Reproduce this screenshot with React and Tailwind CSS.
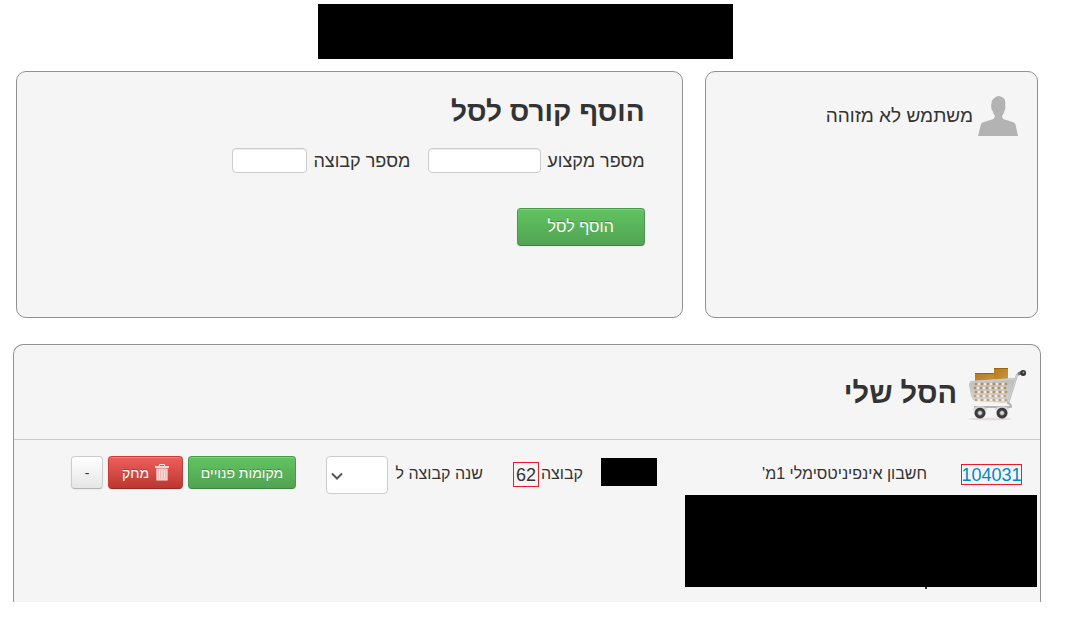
import React from "react";

function UserIcon() {
  return (
    <svg viewBox="0 0 40 40" className="h-10 w-10 shrink-0" fill="#b3b3b3" aria-hidden="true">
      <path d="M0 40 3 28Q3.500 26.500 6 26L14 23.500Q17 22.500 16.800 19.500Q15.300 18 14.700 15Q13.200 14 13.200 11.500Q12.800 9 13.600 7Q13.500 3.500 16.500 2Q18.500 0 20.500 0Q22 0 23 .800Q26.500 1.500 27.200 5Q27.500 7 27.200 9Q28.200 12.500 26.400 15Q25.800 18 24.200 19.500Q23.800 22.500 26.500 23.500L34.500 26Q37 26.500 37.500 28.500L40 40Z" />
    </svg>
  );
}

function CartIcon() {
  const rows = [385, 389, 393, 397, 401];
  return (
    <svg viewBox="966 364 64 60" className="h-[60px] w-16 shrink-0" aria-hidden="true">
      <defs>
        <linearGradient id="box" x1="0" y1="0" x2="1" y2="1">
          <stop offset="0" stopColor="#b57a1c" />
          <stop offset="1" stopColor="#ca9744" />
        </linearGradient>
        <linearGradient id="mesh" x1="0" y1="0" x2="0" y2="1">
          <stop offset="0" stopColor="#bcbcbc" />
          <stop offset="1" stopColor="#d6d5d3" />
        </linearGradient>
        <radialGradient id="wheel">
          <stop offset="0" stopColor="#f2f2f2" />
          <stop offset=".3" stopColor="#b8b8b8" />
          <stop offset=".5" stopColor="#444" />
          <stop offset=".8" stopColor="#333" />
          <stop offset="1" stopColor="#777" />
        </radialGradient>
      </defs>
      <ellipse cx="991" cy="420" rx="22" ry="1.300" fill="#e4dddd" />
      <path d="M976 374.500h19v9h-19z" fill="url(#box)" />
      <path d="M995 369h14v14h-14z" fill="url(#box)" />
      <path d="M976 374.500h19M995 369.500h14" stroke="#9b6510" />
      <path d="M973 382 1016 379Q1018 380 1016 383L1011 401Q1009 404 1005 404L976 402Q973 401 972 396L970 386Q970 383 973 382Z" fill="url(#mesh)" />
      {rows.map((y, r) =>
        [0, 1, 2, 3, 4, 5].map((c) => (
          <path
            key={`${r}-${c}`}
            d={`M${977 + c * 6 - (r % 2) * 1} ${y - 1.6}l1.600 1.600-1.600 1.600-1.600-1.600z`}
            fill={r < 3 ? "#bb8845" : "#c89c6b"}
          />
        ))
      )}
      {rows.map((y, r) =>
        [0, 1, 2, 3, 4].map((c) => (
          <circle key={`${r}+${c}`} cx={980 + c * 6 - (r % 2)} cy={y} r="1.100" fill="#f6f4f2" />
        ))
      )}
      <path d="M971 383 1016 380" stroke="#c9c9c9" strokeWidth="2" fill="none" />
      <path d="M1022 374 1018 376 1009 404Q1012 405 1012 408L975 408" stroke="#b5b5b5" strokeWidth="2.200" fill="none" strokeLinejoin="round" />
      <path d="M1018 376 1009 403" stroke="#dedede" strokeWidth=".800" />
      <path d="M1019 375 1024 373" stroke="#777" strokeWidth="3" />
      <circle cx="1024.200" cy="374" r="2.900" fill="#333" />
      <circle cx="1024.500" cy="373.500" r="1" fill="#aaa" />
      <circle cx="981" cy="414" r="5.700" fill="url(#wheel)" />
      <circle cx="1003" cy="414" r="5.700" fill="url(#wheel)" />
      <path d="M974 410.500Q981 405 988 410.500M996 410.500Q1003 405 1010 410.500" stroke="#d4d4d4" strokeWidth="1.500" fill="none" />
    </svg>
  );
}

function TrashIcon() {
  return (
    <svg viewBox="0 0 14 17" className="h-[17px] w-3.5 shrink-0" fill="none" stroke="#fbe3e2" aria-hidden="true">
      <path d="M4.500 2V.5h5V2" />
      <path d="M0 3h14" strokeWidth="1.800" />
      <path d="M2 5v11h10V5z" fill="#f0b5b3" strokeWidth="1.200" />
      <path d="M4.500 6v9M7 6v9M9.500 6v9" strokeWidth="1.200" />
    </svg>
  );
}

const panel = "rounded-[10px] border border-[#919191] bg-[#f5f5f5]";
const field =
  "h-[25px] rounded-[4px] border border-[#ccc] bg-white px-1 text-sm shadow-[inset_0_1px_1px_rgba(0,0,0,0.075)]";
const button =
  "flex shrink-0 items-center justify-center rounded-[4px] border [text-shadow:0_-1px_0_rgba(0,0,0,0.25)] shadow-[inset_0_1px_0_rgba(255,255,255,0.2),0_1px_2px_rgba(0,0,0,0.05)]";
const green = "border-[#4a994a] border-b-[#3f853f] bg-linear-to-b from-[#62c462] to-[#51a351] text-white";

export default function App() {
  return (
    <div dir="rtl" className="bg-white pt-1 pr-6 pb-4 pl-[13px] font-['Liberation_Sans',Arial,sans-serif] text-[#333]">
      <header className="flex justify-center pr-1">
        <div className="h-[55px] w-[415px] bg-black" />
      </header>

      <div className="mt-3 grid grid-cols-[1fr_2fr] gap-[22px] px-[3px]">
        <aside className={`${panel} h-[247px] px-[19px] pt-6`}>
          <div className="flex items-center gap-[5px] text-[19px] leading-6">
            <UserIcon />
            <span>משתמש לא מזוהה</span>
          </div>
        </aside>

        <section className={`${panel} px-[37px] pt-5`}>
          <h2 className="text-[28px] leading-10 font-bold">הוסף קורס לסל</h2>
          <form onSubmit={(e) => e.preventDefault()}>
            <div className="mt-4 flex items-center gap-1.5 text-[18px] leading-6">
              <label htmlFor="course">מספר מקצוע</label>
              <input id="course" className={`${field} w-[113px]`} />
              <label htmlFor="group" className="mr-3">מספר קבוצה</label>
              <input id="group" className={`${field} w-[75px]`} />
            </div>
            <button type="submit" className={`${button} ${green} mt-[35px] h-[38px] w-32 text-[16px] leading-5`}>
              הוסף לסל
            </button>
          </form>
        </section>
      </div>

      <main className="mt-[26px] rounded-t-[10px] border border-b-0 border-[#919191] bg-[#f5f5f5]">
        <div className="flex h-[95px] items-center gap-2 border-b border-[#ccc] pt-0.5 pr-[11px]">
          <CartIcon />
          <h2 className="text-[29px] leading-10 font-bold">הסל שלי</h2>
        </div>

        <div className="flex items-start pt-4 pr-[18px] pl-[57px] text-[16px] leading-5">
          <a href="#104031" className="mt-2 flex h-[21px] w-[61px] shrink-0 items-center justify-center border border-[#ed1c24] text-[18px] text-[#0088cc]">
            104031
          </a>
          <span className="mt-2 mr-[34px] w-[270px] shrink-0">חשבון אינפיניטסימלי 1מ'</span>
          <span className="mt-0.5 h-7 w-14 shrink-0 bg-black" />
          <span className="mt-2 mr-[18px] shrink-0">קבוצה</span>
          <span className="mt-1.5 mr-0.5 flex h-[25px] w-[26px] shrink-0 items-center justify-center border border-[#ed1c24] text-[18px]">62</span>
          <label htmlFor="year" className="mt-2 mr-[30px] shrink-0">שנה קבוצה ל</label>
          <div className="relative mr-2 shrink-0">
            <select id="year" className="block h-[38px] w-[62px] appearance-none rounded-[4px] border border-[#ccc] bg-white" />
            <svg viewBox="0 0 12 8" className="pointer-events-none absolute top-4 left-[5px] h-2 w-3" fill="none" stroke="#555" strokeWidth="2" aria-hidden="true">
              <path d="M1 1.500 6 6.500l5-5" />
            </svg>
          </div>
          <div className="mr-auto flex gap-[5px] text-[14px]">
            <button type="button" className={`${button} ${green} h-[33px] w-[108px]`}>מקומות פנויים</button>
            <button
              type="button"
              className={`${button} h-[33px] w-[75px] gap-1.5 border-[#c43c35] border-b-[#942a25] bg-linear-to-b from-[#ee5f5b] to-[#bd362f] text-white`}
            >
              <TrashIcon />
              מחק
            </button>
            <button
              type="button"
              className="h-[33px] w-8 rounded-[4px] border border-[#ccc] border-b-[#b3b3b3] bg-linear-to-b from-white to-[#e6e6e6] shadow-[0_1px_2px_rgba(0,0,0,0.05)]"
            >
              -
            </button>
          </div>
        </div>

        <div className="mt-px h-[107px] pr-[3px]">
          <div className="h-[92px] w-[352px] bg-black" />
          <div className="mr-[110px] h-0.5 w-0.5 bg-[#333]" />
        </div>
      </main>
    </div>
  );
}
